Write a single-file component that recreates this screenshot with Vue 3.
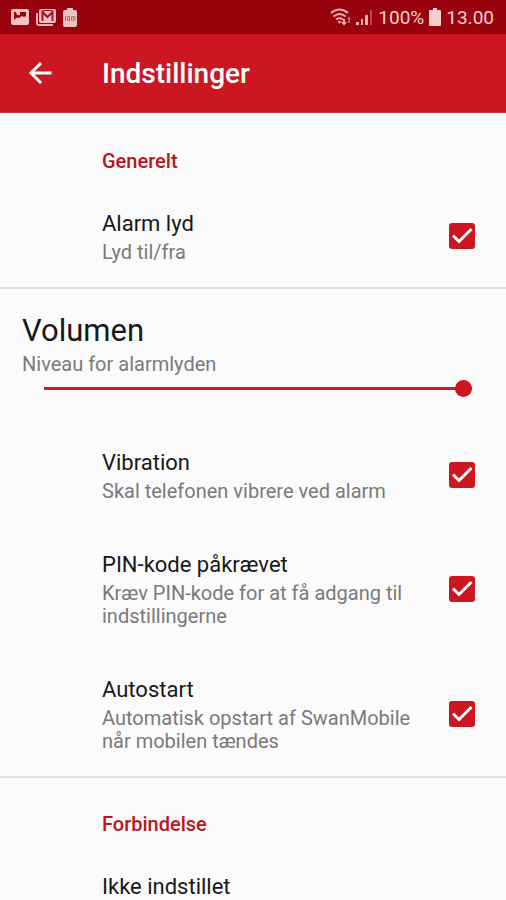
<script setup>
import { reactive, ref } from 'vue'

const alarm = reactive([
  { id: 'sound', title: 'Alarm lyd', summary: 'Lyd til/fra', on: true },
])
const behaviour = reactive([
  { id: 'vibration', title: 'Vibration', summary: 'Skal telefonen vibrere ved alarm', on: true },
  { id: 'pin', title: 'PIN-kode påkrævet', summary: 'Kræv PIN-kode for at få adgang til indstillingerne', on: true },
  { id: 'autostart', title: 'Autostart', summary: 'Automatisk opstart af SwanMobile når mobilen tændes', on: true },
])
const volume = ref(100)
</script>

<template>
  <div class="screen">
    <div class="status">
      <div class="group">
        <svg width="18" height="18" viewBox="0 0 18 18" aria-hidden="true">
          <path fill="#f0c2c3" fill-rule="evenodd" d="M2 1h14q2 0 2 2v12q0 2-2 2H2q-2 0-2-2V3q0-2 2-2zM3 4v8l3-2.500 2 .5 3-2 2 1 2-1V4z" />
          <path fill="#f0c2c3" d="M5 4h4v3H6z" />
        </svg>
        <svg width="20" height="18" viewBox="0 0 20 18" aria-hidden="true">
          <path fill="none" stroke="#e6aeb0" stroke-width="2" d="M1 5v10q0 2 2 2h14" />
          <rect x="3" y="1" width="17" height="14" rx="2" fill="#f0c2c3" />
          <path fill="none" stroke="#9a1520" stroke-width="2" d="M6.500 13V4l5 5 5-5v9" />
          <path fill="none" stroke="#9a1520" d="M7 2.500h9" />
        </svg>
        <svg width="14" height="19" viewBox="0 0 14 19" aria-hidden="true">
          <path fill="#f0c2c3" d="M4 0h6v2h2q2 0 2 2v13q0 2-2 2H2q-2 0-2-2V4q0-2 2-2h2z" />
          <path fill="none" stroke="#b86a6c" d="M2.500 8v5M4.500 8.500h2v4h-2zM8.500 8.500h2v4h-2zM12 8v5" />
        </svg>
      </div>
      <div class="group right">
        <svg width="21" height="18" viewBox="0 0 21 18" aria-hidden="true">
          <g fill="none" stroke="#e9b0b2" stroke-width="2">
            <path d="M1 5q8.500-7 17 0M3.500 8.500q6-5 12 0M6 11.500q3.500-2.500 7 0" />
          </g>
          <path fill="#e9b0b2" d="M7.500 13h4l-2 3z" />
          <path fill="#e9b0b2" d="M13 11h2v3h2l-3 3.500-3-3.500h2z" />
          <path fill="#c8585e" d="M18 15h2v-4h1l-2-3-2 3h1z" />
        </svg>
        <svg width="17" height="18" viewBox="0 0 17 18" aria-hidden="true">
          <path fill="#e9b0b2" d="M0 14h3v3H0zM5 11h2v6H5zM9 7h3v10H9z" />
          <path fill="#b94a50" d="M14 2h2v15h-2z" />
        </svg>
        <span>100%</span>
        <svg width="12" height="18" viewBox="0 0 12 18" aria-hidden="true">
          <path fill="#f3d0d0" d="M4 0h4v2h3q1 0 1 1v14q0 1-1 1H1q-1 0-1-1V3q0-1 1-1h3z" />
        </svg>
        <span>13.00</span>
      </div>
    </div>

    <header class="bar">
      <button class="back" type="button" aria-label="Tilbage">
        <svg width="24" height="24" viewBox="0 0 24 24" aria-hidden="true">
          <path fill="none" stroke="#fff" stroke-width="3" d="M23.500 12H3M13 2L3 12l10 10" />
        </svg>
      </button>
      <h1>Indstillinger</h1>
    </header>

    <main>
      <section class="section">
        <h2>Generelt</h2>
        <label v-for="item in alarm" :key="item.id" class="row">
          <span class="text">
            <span class="title">{{ item.title }}</span>
            <span class="summary">{{ item.summary }}</span>
          </span>
          <span class="tick">
            <input v-model="item.on" type="checkbox">
            <svg viewBox="0 0 26 26" aria-hidden="true"><path d="M4 12.500l6 6L22.500 6" /></svg>
          </span>
        </label>
      </section>

      <section class="section">
        <div class="volume">
          <label for="volume">
            <span class="large">Volumen</span>
            <span class="summary">Niveau for alarmlyden</span>
          </label>
          <input id="volume" v-model="volume" type="range" min="0" max="100">
        </div>
        <label v-for="item in behaviour" :key="item.id" class="row">
          <span class="text">
            <span class="title">{{ item.title }}</span>
            <span class="summary">{{ item.summary }}</span>
          </span>
          <span class="tick">
            <input v-model="item.on" type="checkbox">
            <svg viewBox="0 0 26 26" aria-hidden="true"><path d="M4 12.500l6 6L22.500 6" /></svg>
          </span>
        </label>
      </section>

      <section class="section">
        <h2>Forbindelse</h2>
        <div class="row">
          <span class="text"><span class="title">Ikke indstillet</span></span>
        </div>
      </section>
    </main>
  </div>
</template>

<style>
body {
  margin: 0;
  background: #fbfbfb;
}
</style>

<style scoped>
.screen {
  height: 100vh;
  overflow: hidden;
  display: flex;
  flex-direction: column;
  background: #fbfbfb;
  font-family: Roboto, "Liberation Sans", sans-serif;
  color: #181818;
}
.status {
  flex: none;
  display: flex;
  justify-content: space-between;
  align-items: center;
  height: 34px;
  padding: 0 12px 0 11px;
  background: #98030e;
  color: #f3d0d0;
  font-size: 19px;
}
.group {
  display: flex;
  align-items: center;
  gap: 7px;
}
.right {
  gap: 5px;
}
.bar {
  flex: none;
  display: flex;
  align-items: center;
  height: 79px;
  background: #cc1622;
  border-bottom: 1px solid #bb3a44;
  box-sizing: border-box;
  color: #fff;
}
.back {
  display: flex;
  align-items: center;
  justify-content: center;
  width: 80px;
  height: 56px;
  margin-right: 22px;
  padding: 0;
  border: 0;
  background: none;
}
h1 {
  margin: 0;
  padding-top: 2px;
  font-size: 28px;
  line-height: 32px;
  font-weight: 500;
}
main {
  flex: 1;
  min-height: 0;
  overflow: hidden;
  padding-top: 2px;
}
.section + .section {
  border-top: 2px solid #e1e1e1;
}
h2 {
  margin: 0;
  padding: 34px 22px 12px 102px;
  font-size: 20px;
  line-height: 24px;
  font-weight: 500;
  color: #b91520;
}
.row {
  display: flex;
  align-items: center;
  justify-content: space-between;
  gap: 24px;
  padding: 23px 31px 23px 102px;
}
.text {
  display: flex;
  flex-direction: column;
  gap: 3px;
  padding-top: 2px;
}
.title {
  font-size: 22px;
  line-height: 28px;
}
.summary {
  font-size: 20px;
  line-height: 23px;
  color: #7a7a7a;
}
.tick {
  flex: none;
  display: grid;
  width: 26px;
  height: 26px;
}
.tick input,
.tick svg {
  grid-area: 1 / 1;
  width: 26px;
  height: 26px;
  margin: 0;
}
.tick input {
  appearance: none;
  box-sizing: border-box;
  border: 3px solid #777;
  border-radius: 3px;
}
.tick input:checked {
  border-color: #cc1622;
  background: #cc1622;
}
.tick svg {
  pointer-events: none;
  fill: none;
  stroke: #fff;
  stroke-width: 3;
  visibility: hidden;
}
.tick input:checked + svg {
  visibility: visible;
}
.volume {
  display: flex;
  flex-direction: column;
  padding: 24px 22px;
}
.volume label {
  display: flex;
  flex-direction: column;
  gap: 4px;
}
.large {
  font-size: 31px;
  line-height: 36px;
}
.volume input {
  appearance: none;
  height: 24px;
  margin: 0 12px 0 22px;
  background: linear-gradient(#c4202b, #c4202b) center / 100% 3px no-repeat;
}
.volume input::-webkit-slider-thumb {
  appearance: none;
  width: 17px;
  height: 17px;
  border-radius: 50%;
  background: #cc1622;
}
</style>
